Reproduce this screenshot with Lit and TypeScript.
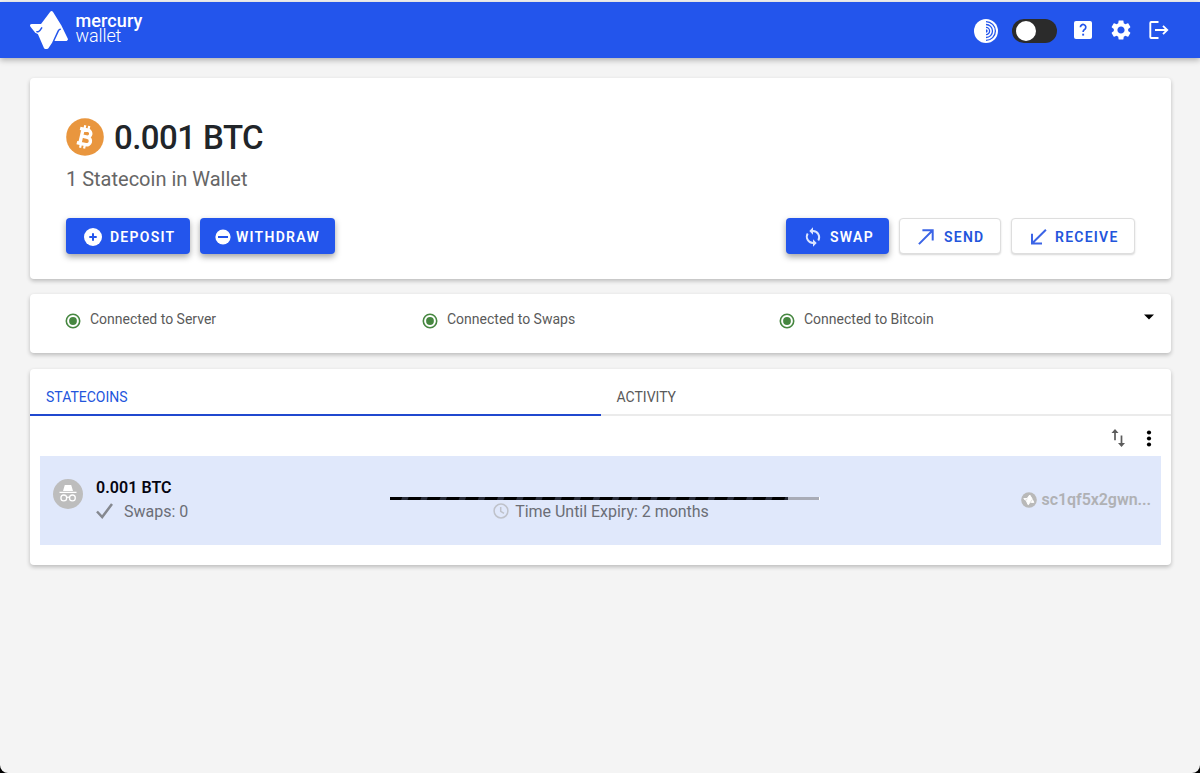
import { LitElement, html, svg, css } from "lit";
import { customElement, property } from "lit/decorators.js";

const mark = (fill: string, slit: string) => svg`
  <g stroke-linejoin="round" stroke-linecap="round">
    <path d="M1.800 14.600 H12 L21.600 1.800 L29.500 14.600 L36.200 28.200 H27.500 L22.500 28 L17 36.200 H15.500 L9.300 22 L6.600 20.600 Z" fill="${fill}" stroke="${fill}" stroke-width="3.400"/>
    <path d="M11.700 16.800 Q9.800 20 8.500 20.600 Q7.500 21 6.900 20.700 M30.200 18.300 Q29 18.500 28.300 19.900 L24.300 28.500 L23.300 31" fill="none" stroke="${slit}" stroke-width="1.500"/>
  </g>`;

@customElement("status-item")
class StatusItem extends LitElement {
  @property() label = "";
  static styles = css`
    :host { display: flex; align-items: flex-start; }
    svg { display: block; margin: 19px 9.500px 0 -.5px; }
    span { margin-top: 16.400px; font-size: 14px; line-height: 18px; color: #5a5a5a; white-space: nowrap; }
  `;
  render() {
    return html`<svg width="16" height="16" viewBox="0 0 16 16">
        <circle cx="8" cy="8" r="6.700" fill="none" stroke="#468740" stroke-width="1.600" />
        <circle cx="8" cy="8" r="3.900" fill="#468740" />
      </svg><span>${this.label}</span>`;
  }
}

@customElement("app-root")
class AppRoot extends LitElement {
  static styles = css`
    :host { display: block; height: 773px; background: #000; font-family: Roboto, sans-serif; }
    * { box-sizing: border-box; }
    svg { display: block; flex: none; }
    .window { height: 773px; background: #f4f4f4; border-radius: 0 0 8px 8px; padding-top: 2px; overflow: hidden; }
    header { height: 56px; background: #2355ec; box-shadow: 0 2px 6px rgba(0,0,0,.3); padding: 0 29px 0 30px; display: flex; align-items: flex-start; }
    .logo { margin-top: 9px; }
    .brand { margin: 11px auto 0 7.500px; color: #fff; font-size: 18px; line-height: 15px; }
    .brand div { height: 15px; }
    .brand .name { font-weight: 500; letter-spacing: .1px; }
    .brand .sub { font-weight: 300; letter-spacing: -.1px; }
    .tools { display: flex; align-items: center; height: 56px; }
    .toggle { width: 45px; height: 24px; border-radius: 12px; background: #2b2b2b; padding: 2px 4px; margin: 0 14px; }
    .knob { width: 20px; height: 20px; border-radius: 50%; background: #fff; }
    .tools svg + svg { margin-left: 14px; }
    .disc, .toggle { position: relative; top: .5px; }
    main { padding: 20px 29px 0 30px; display: flex; flex-direction: column; }
    .card { background: #fff; border-radius: 4px; box-shadow: 0 2px 4px rgba(0,0,0,.24); }
    .balance { height: 201px; padding: 39px 36px 0; }
    .amount { display: flex; align-items: center; gap: 10px; height: 40px; }
    .amount b { font-size: 33px; font-weight: 500; line-height: 38px; letter-spacing: -.55px; margin-top: 1px; color: #212529; white-space: nowrap; }
    .count { font-size: 20px; line-height: 24px; margin-top: 10px; color: #666; white-space: nowrap; }
    .actions { display: flex; margin-top: 27px; }
    .btn { height: 36px; display: flex; align-items: center; border-radius: 4px; background: #2355ec; color: #fff; font-size: 14px; line-height: 18px; padding-top: 1px; font-weight: 600; letter-spacing: 1.25px; box-shadow: 0 3px 6px rgba(0,0,0,.36); white-space: nowrap; }
    .deposit { width: 124px; padding-left: 18px; gap: 8px; }
    .withdraw { width: 135px; padding-left: 15px; gap: 5px; margin: 0 auto 0 10px; }
    .swap { width: 103px; padding-left: 18px; gap: 8px; }
    .light { background: #fff; color: #2355dc; border: 1px solid #dedede; box-shadow: 0 1px 2px rgba(0,0,0,.16); }
    .send { width: 102px; margin: 0 10px; padding-left: 18px; gap: 10px; }
    .receive { width: 124px; padding-left: 18px; gap: 8px; }
    .status { height: 59px; margin: 15px 0 16px; padding: 0 16px 0 35px; display: grid; grid-template-columns: 357px 357px 1fr auto; }
    .caret { margin-top: 20px; }
    .coins { height: 196px; }
    .tabs { display: grid; grid-template-columns: 570.500px 1fr; height: 47px; }
    .tab { padding: 19px 16px 0; font-size: 14px; line-height: 18px; color: #5a5a5a; border-bottom: 2px solid #ebebeb; }
    .tab.active { color: #2355dc; border-color: #2048cf; }
    .sort { height: 40px; display: flex; justify-content: flex-end; padding: 12px 18px 0 0; gap: 18px; }
    .row { margin: 0 10px; height: 89px; background: #e0e8fb; display: grid; grid-template-columns: 350px 431px 1fr; }
    .coin { display: flex; padding: 23px 0 0 13px; gap: 13px; }
    .coin b { display: block; font-size: 16px; font-weight: 600; line-height: 18px; letter-spacing: .05px; color: #050510; white-space: nowrap; }
    .meta { display: flex; align-items: center; height: 20px; margin-top: 4px; font-size: 16px; color: #6b6e76; gap: 11px; }
    .bar { margin-top: 40.500px; height: 3px; width: 430px; background: #a9acb7; border-right: 1px solid #fff; }
    .fill { height: 3px; background: repeating-linear-gradient(110deg, #000 0 11px, #292c38 12px 17px, #000 18px); }
    .expiry { display: flex; align-items: center; justify-content: center; gap: 6px; height: 20px; margin-top: 1.500px; padding-right: 9px; font-size: 16px; letter-spacing: -.02px; color: #6b6e76; white-space: nowrap; }
    .address { display: flex; justify-content: flex-end; align-items: center; height: 20px; margin-top: 33px; padding-right: 10px; gap: 5px; color: #b0b1b4; font-size: 16px; letter-spacing: -.06px; font-weight: 600; white-space: nowrap; }
    .address svg { margin-top: 2px; }
  `;

  render() {
    return html`<div class="window">
      <header>
        <svg class="logo" width="38" height="39" viewBox="0 0 38 39">${mark("#fff", "#2355ec")}</svg>
        <div class="brand"><div class="name">mercury</div><div class="sub">wallet</div></div>
        <div class="tools">
          <svg class="disc" width="24" height="24" viewBox="0 0 24 24">
            <circle cx="12" cy="12" r="12" fill="#fff" />
            <g fill="none" stroke="#2355ec" stroke-width="1.300">
              <path d="M12 2.600a9.400 9.400 0 0 1 0 18.800M12 5.500a6.500 6.500 0 0 1 0 13M12 8.400a3.600 3.600 0 0 1 0 7.200" />
            </g>
            <path d="M12 10.300a1.700 1.700 0 0 1 0 3.400Z" fill="#2355ec" />
          </svg>
          <div class="toggle"><div class="knob"></div></div>
          <svg width="24" height="24" viewBox="0 0 24 24"><rect x="3" y="3" width="18" height="18" rx="2" fill="#fff" /><path d="M9.400 9.200a2.700 2.700 0 1 1 4.600 1.900c-1 .9-1.900 1.400-1.900 3" fill="none" stroke="#2355ec" stroke-width="1.700" /><rect x="11.200" y="15.700" width="1.900" height="1.900" fill="#2355ec" /></svg>
          <svg width="24" height="24" viewBox="0 0 24 24"><path fill="#fff" d="M19.140 12.940c.04-.3.06-.61.06-.94 0-.32-.02-.64-.07-.94l2.030-1.580c.18-.14.23-.41.120-.61l-1.920-3.320c-.12-.22-.37-.29-.59-.22l-2.390.96c-.5-.38-1.030-.7-1.620-.94l-.36-2.540c-.04-.24-.24-.41-.48-.41h-3.840c-.24 0-.43.17-.47.41l-.36 2.540c-.59.24-1.130.57-1.620.94l-2.390-.96c-.22-.08-.47 0-.59.22L2.740 8.870c-.12.21-.08.47.12.61l2.030 1.580c-.05.3-.09.63-.09.94s.02.64.07.94l-2.030 1.580c-.18.14-.23.41-.12.61l1.920 3.320c.12.22.37.29.59.22l2.390-.96c.5.38 1.030.7 1.620.94l.36 2.540c.05.24.24.41.48.41h3.840c.24 0 .44-.17.47-.41l.36-2.540c.59-.24 1.130-.56 1.620-.94l2.390.96c.22.08.47 0 .59-.22l1.920-3.320c.12-.22.07-.47-.12-.61l-2.010-1.580zM12 15.600c-1.980 0-3.600-1.620-3.600-3.600s1.620-3.600 3.600-3.600 3.600 1.620 3.600 3.600-1.620 3.600-3.600 3.600z" /></svg>
          <svg width="24" height="24" viewBox="0 0 24 24" fill="none" stroke="#fff" stroke-width="1.900"><path d="M11.500 4H4.200Q3.300 4 3.300 5V19Q3.300 20 4.200 20H11.500M8 12H20M16 7.900L20.200 12L16 16.100" /></svg>
        </div>
      </header>
      <main>
        <section class="card balance">
          <div class="amount">
            <svg width="38" height="38" viewBox="0 0 38 38"><circle cx="19" cy="19" r="18.800" fill="#e9963e" />
              <g transform="rotate(13 19 19)" fill="none" stroke="#fff" stroke-width="3.400"><path d="M12.300 11.700H20.500a3.400 3.400 0 0 1 0 7H15.200M15.200 18.700H21.500a3.800 3.800 0 0 1 0 7.600H12.300M15.400 11.700V26.500" /><path stroke-width="2.200" d="M16.600 7.400V11M20.700 7.400V11M16.600 27V30.500M20.700 27V30.500" /></g>
            </svg>
            <b>0.001 BTC</b>
          </div>
          <div class="count">1 Statecoin in Wallet</div>
          <div class="actions">
            <div class="btn deposit"><svg width="18" height="18" viewBox="0 0 18 18"><circle cx="9" cy="9" r="9" fill="#fff" /><path d="M9 5.300V12.700M5.300 9H12.700" stroke="#2355ec" stroke-width="2" /></svg>DEPOSIT</div>
            <div class="btn withdraw"><svg width="16" height="16" viewBox="0 0 16 16"><circle cx="8" cy="8" r="7.600" fill="#fff" /><path d="M3 8H13" stroke="#2355ec" stroke-width="2" /></svg>WITHDRAW</div>
            <div class="btn swap"><svg width="18" height="20" viewBox="0 0 18 20" fill="none" stroke="#dce5ff" stroke-width="1.900"><path d="M9 4a6.300 6.300 0 0 1 5.300 9.500M9 16A6.300 6.300 0 0 1 3.700 6.500" /><path fill="#dce5ff" stroke="none" d="M9 .3V7.700L5.300 4ZM9 12.300V19.700L12.700 16Z" /></svg>SWAP</div>
            <div class="btn light send"><svg width="16" height="16" viewBox="0 0 16 16" fill="none" stroke="#3b64e6" stroke-width="2"><path d="M.9 15.100L14.700 1.300M4.400 1.300H14.700V11.600" /></svg>SEND</div>
            <div class="btn light receive"><svg width="17" height="16" viewBox="0 0 17 16" fill="none" stroke="#3b64e6" stroke-width="2"><path d="M15.900 .8L2 14.500M2 4.700V14.500H12" /></svg>RECEIVE</div>
          </div>
        </section>
        <section class="card status">
          <status-item label="Connected to Server"></status-item>
          <status-item label="Connected to Swaps"></status-item>
          <status-item label="Connected to Bitcoin"></status-item>
          <svg class="caret" width="12" height="6" viewBox="0 0 12 6"><path d="M1 .5H11L6 5.500Z" /></svg>
        </section>
        <section class="card coins">
          <div class="tabs"><div class="tab active">STATECOINS</div><div class="tab">ACTIVITY</div></div>
          <div class="sort">
            <svg width="15" height="20" viewBox="0 0 15 20" fill="none" stroke="#5c5c5c" stroke-width="1.700"><path d="M4 12.300V3M10.500 7.500V17" /><path fill="#5c5c5c" stroke="none" d="M4 1L7.500 5H.5ZM10.500 19L14 15H7Z" /></svg>
            <svg width="9" height="20" viewBox="0 0 9 20"><circle cx="5" cy="4.500" r="2.100" /><circle cx="5" cy="10.500" r="2.100" /><circle cx="5" cy="16.500" r="2.100" /></svg>
          </div>
          <div class="row">
            <div class="coin">
              <svg width="30" height="30" viewBox="0 0 30 30"><circle cx="15" cy="15" r="15" fill="#bdbdbd" /><path fill="#fff" d="M11.800 6H18.200L20 12H10ZM6.500 12.800H23.500V14H6.500Z" /><g fill="none" stroke="#fff" stroke-width="1.300"><circle cx="10.800" cy="18.900" r="2.900" /><circle cx="19.400" cy="18.900" r="2.900" /><path d="M13.700 18.500Q15 17.700 16.500 18.500" /></g></svg>
              <div><b>0.001 BTC</b><div class="meta"><svg width="17" height="18" viewBox="0 0 17 18"><path d="M1 9.500L6.200 15L16 2" fill="none" stroke="#85888f" stroke-width="2.500" /></svg>Swaps: 0</div></div>
            </div>
            <div>
              <div class="bar"><div class="fill" style="width:92.800%"></div></div>
              <div class="expiry"><svg width="16" height="16" viewBox="0 0 16 16" fill="none" stroke="#bfc2ca" stroke-width="1.500"><circle cx="8" cy="8" r="6.900" /><path d="M7.700 4V8.300L11 10.300" /></svg>Time Until Expiry: 2 months</div>
            </div>
            <div class="address"><svg width="16" height="16" viewBox="0 0 16 16"><circle cx="8" cy="8" r="7.800" fill="#b9b9b9" /><g transform="translate(2.700 2.500) scale(.28)">${mark("#fff", "#b9b9b9")}</g></svg>sc1qf5x2gwn...</div>
          </div>
        </section>
      </main>
    </div>`;
  }
}
